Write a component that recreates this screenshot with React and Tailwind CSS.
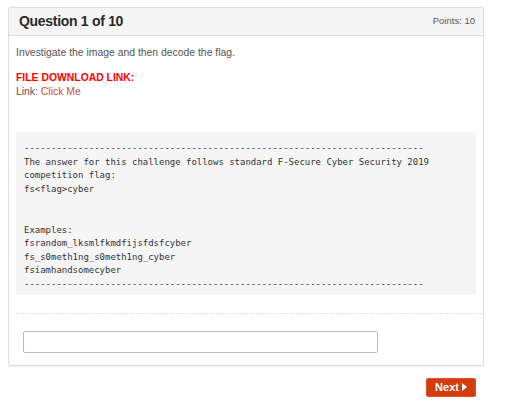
export default function App() {
  const pre = `--------------------------------------------------------------------------
The answer for this challenge follows standard F-Secure Cyber Security 2019
competition flag:
fs<flag>cyber


Examples:
fsrandom_lksmlfkmdfijsfdsfcyber
fs_s0meth1ng_s0meth1ng_cyber
fsiamhandsomecyber
--------------------------------------------------------------------------`;
  return (
    <div className="w-[512px] h-[413px] bg-white pt-[7px] pl-[8px]" style={{ fontFamily: '"Liberation Sans", Arial, sans-serif' }}>
      <div className="w-[476px] border border-[#dddddd] rounded-[2px] shadow-[0_1px_1px_rgba(0,0,0,0.05)]">
        <div className="h-[28px] bg-[#f5f5f5] border-b border-[#dddddd] flex items-center justify-between pl-[10px] pr-[8px]">
          <span className="text-[14px] font-bold tracking-[-0.3px] text-[#2a2a2a]">Question 1 of 10</span>
          <span className="text-[9.5px] text-[#555]">Points: 10</span>
        </div>
        <div className="px-[7px] pt-[10px]">
          <p className="text-[10.4px] leading-[14px] text-[#555]">Investigate the image and then decode the flag.</p>
          <p className="mt-[11px] text-[10.4px] leading-[14px] font-bold text-[#ff0000]">FILE DOWNLOAD LINK:</p>
          <p className="text-[10.4px] leading-[14px] text-[#555]">Link: <span className="text-[#cc4a3f]">Click Me</span></p>
          <pre className="mt-[33px] bg-[#f5f5f5] rounded-[2px] px-[8px] pt-[10px] pb-[3px] text-[8.98px] leading-[13.6px] text-[#333]" style={{ fontFamily: '"DejaVu Sans Mono", "Liberation Mono", monospace' }}>{pre}</pre>
        </div>
        <div className="mt-[18px] ml-[7px] border-t border-dashed border-[#dddddd]" />
        <div className="px-[14px] pt-[17px] pb-[12px]">
          <div className="w-[355px] h-[22px] border border-[#bbbbbb] rounded-[2px] bg-white" />
        </div>
      </div>
      <div className="w-[468px] flex justify-end mt-[12px]">
        <button className="w-[50px] h-[19px] bg-[#d23e10] border border-[#e05030] rounded-[2px] text-white text-[11px] font-bold flex items-center justify-center gap-[3px]">
          <span>Next</span>
          <svg width="5" height="8" viewBox="0 0 5 8"><path d="M0 0 L5 4 L0 8 Z" fill="white" /></svg>
        </button>
      </div>
    </div>
  );
}
